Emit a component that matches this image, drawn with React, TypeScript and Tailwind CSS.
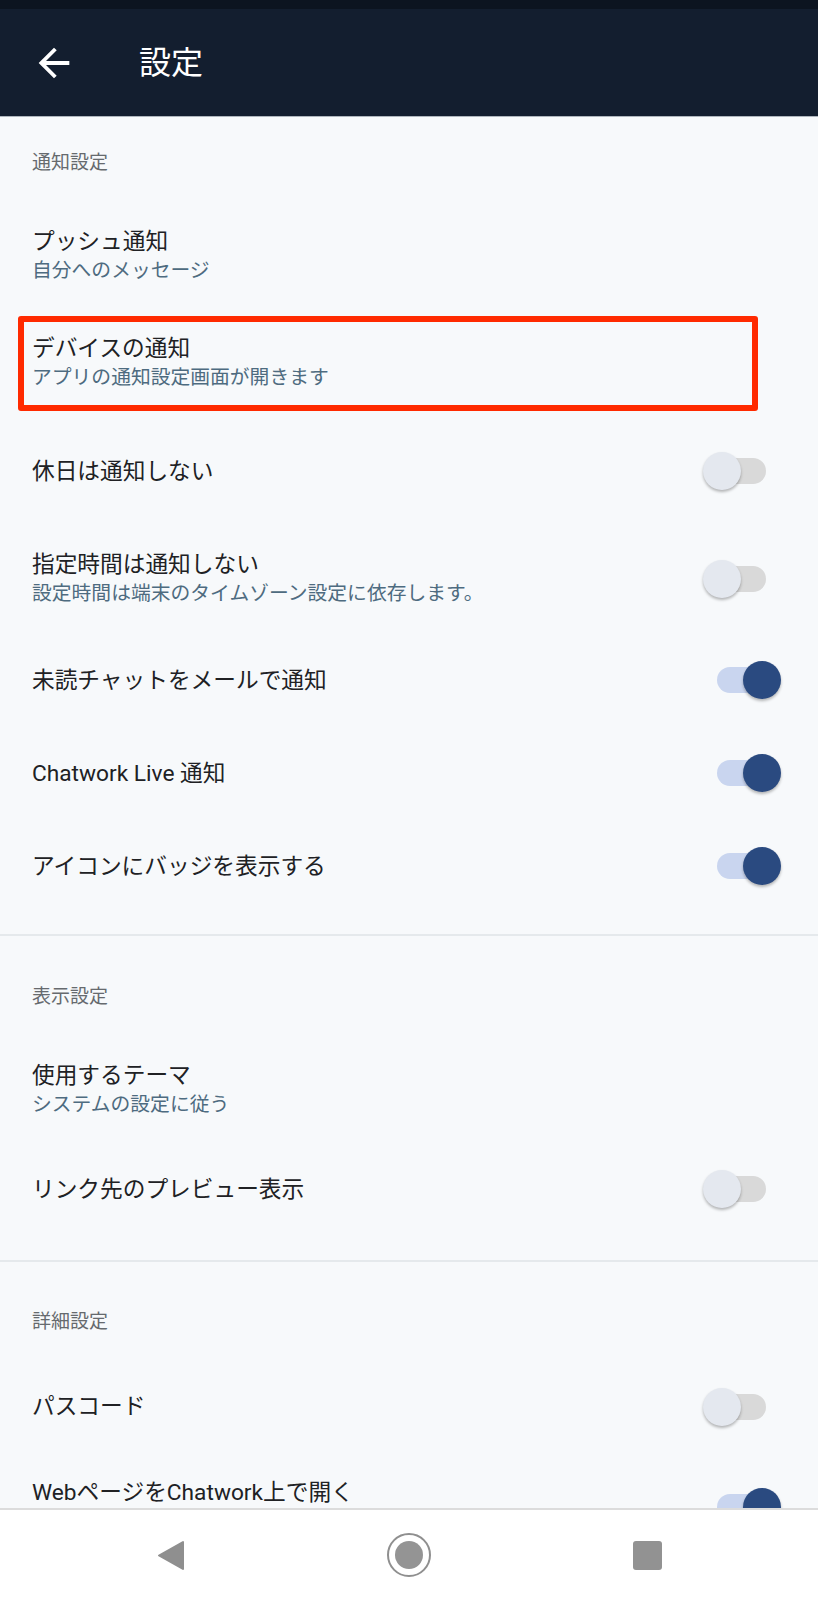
import React from "react";

const FONT = 'Roboto, "Noto Sans CJK JP", "Noto Sans", sans-serif';

function Toggle({ on }: { on: boolean }) {
  return (
    <div className="relative w-[78px] h-[38px] shrink-0">
      <div
        className={
          "absolute left-[14px] top-[6px] w-[49px] h-[26px] rounded-full " +
          (on ? "bg-[#c9d5ef]" : "bg-[#d9d9d9]")
        }
      />
      <div
        className={
          "absolute top-0 w-[38px] h-[38px] rounded-full shadow-[0_2px_3px_rgba(0,0,0,0.28)] " +
          (on ? "left-[40px] bg-[#2a4a80]" : "left-0 bg-[#e4e8ef]")
        }
      />
    </div>
  );
}

function Row({
  title,
  sub,
  toggle,
  h,
  highlight,
  spacer,
}: {
  title: string;
  sub?: string;
  toggle?: "on" | "off";
  h: string;
  highlight?: boolean;
  spacer?: boolean;
}) {
  return (
    <div className={"relative flex items-center justify-between pl-[32px] pr-[37px] " + h}>
      <div className="flex flex-col">
        <div className="text-[22.7px] leading-[29px] text-[#202124] whitespace-nowrap">{title}</div>
        {sub && <div className="text-[19.8px] leading-[29px] text-[#4e6b80] whitespace-nowrap">{sub}</div>}
        {spacer && <div className="h-[29px]" />}
      </div>
      {toggle && <Toggle on={toggle === "on"} />}
      {highlight && (
        <div className="absolute left-[18px] top-[7px] w-[740px] h-[95px] border-[6px] border-[#ff2a00] rounded-[3px]" />
      )}
    </div>
  );
}

function SectionHeader({ text, cls }: { text: string; cls: string }) {
  return (
    <div className={"pl-[32px] " + cls}>
      <div className="text-[19px] leading-[24px] text-[#666a6e]">{text}</div>
    </div>
  );
}

export default function App() {
  return (
    <div
      className="w-[818px] h-[1600px] flex flex-col overflow-hidden bg-[#f7f9fb]"
      style={{ fontFamily: FONT }}
    >
      <div className="h-[9px] bg-[#0c1420] shrink-0" />
      <header className="h-[108px] shrink-0 bg-[#131e2f] border-b border-[#aeb5bd] flex items-center pl-[31px]">
        <svg width="46" height="46" viewBox="0 0 24 24" fill="#ffffff">
          <path d="M20 11H7.83l5.59-5.59L12 4l-8 8 8 8 1.41-1.41L7.83 13H20v-2z" />
        </svg>
        <div className="ml-[62px] text-[32px] leading-[40px] text-white">設定</div>
      </header>

      <main className="flex-1 overflow-hidden flex flex-col">
        <SectionHeader text="通知設定" cls="h-[85px] pt-[34px] shrink-0" />
        <Row h="h-[107px] shrink-0" title="プッシュ通知" sub="自分へのメッセージ" />
        <Row h="h-[107px] shrink-0" title="デバイスの通知" sub="アプリの通知設定画面が開きます" highlight />
        <Row h="h-[110px] shrink-0" title="休日は通知しない" toggle="off" />
        <Row
          h="h-[106px] shrink-0"
          title="指定時間は通知しない"
          sub="設定時間は端末のタイムゾーン設定に依存します。"
          toggle="off"
        />
        <Row h="h-[96px] shrink-0" title="未読チャットをメールで通知" toggle="on" />
        <Row h="h-[90px] shrink-0" title="Chatwork Live 通知" toggle="on" />
        <Row h="h-[96px] shrink-0" title="アイコンにバッジを表示する" toggle="on" />
        <div className="h-[20px] shrink-0" />
        <div className="h-[2px] bg-[#e5e9ec] shrink-0" />

        <SectionHeader text="表示設定" cls="h-[100px] pt-[49px] shrink-0" />
        <Row h="h-[107px] shrink-0" title="使用するテーマ" sub="システムの設定に従う" />
        <Row h="h-[92px] shrink-0" title="リンク先のプレビュー表示" toggle="off" />
        <div className="h-[25px] shrink-0" />
        <div className="h-[2px] bg-[#e5e9ec] shrink-0" />

        <SectionHeader text="詳細設定" cls="h-[98px] pt-[48px] shrink-0" />
        <Row h="h-[93px] shrink-0" title="パスコード" toggle="off" />
        <Row h="h-[107px] shrink-0" title="WebページをChatwork上で開く" toggle="on" spacer />
      </main>

      <nav className="h-[92px] shrink-0 bg-white border-t-2 border-[#dcdcdc] flex items-center pl-[52px]">
        <div className="w-[238px] flex justify-center">
          <svg width="28" height="31" viewBox="0 0 28 31">
            <path d="M26 2 L26 29 L2 15.5 Z" fill="#8f8f8f" stroke="#8f8f8f" strokeWidth="2" strokeLinejoin="round" />
          </svg>
        </div>
        <div className="w-[238px] flex justify-center">
          <div className="w-[44px] h-[44px] rounded-full border-[2.5px] border-[#8f8f8f] flex items-center justify-center">
            <div className="w-[28px] h-[28px] rounded-full bg-[#949494]" />
          </div>
        </div>
        <div className="w-[238px] flex justify-center">
          <div className="w-[29px] h-[29px] rounded-[3px] bg-[#929292]" />
        </div>
      </nav>
    </div>
  );
}
